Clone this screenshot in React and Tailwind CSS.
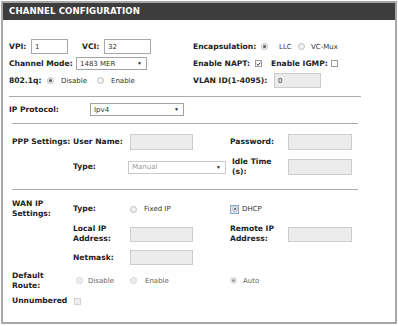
import React from "react";

const B = "font-['DejaVu_Sans',sans-serif] font-bold text-[7.6px] text-[#222] leading-[10px]";
const N = "font-['DejaVu_Sans',sans-serif] text-[7px] text-[#333] leading-[10px]";

function Radio({ checked, disabled, focus }) {
  if (focus) {
    return (
      <span className="flex w-[9px] h-[9px] items-center justify-center border border-[#8fa9d6] bg-[#dfe8f7]">
        <span className="flex w-[6px] h-[6px] items-center justify-center rounded-full bg-[#f4f4f4] border border-[#b9b9b9]">
          {checked && <span className="w-[2px] h-[2px] rounded-full bg-[#444]" />}
        </span>
      </span>
    );
  }
  return (
    <span
      className={
        "flex w-[7px] h-[7px] items-center justify-center rounded-full border " +
        (disabled ? "border-[#d6d6d6] bg-[#ededed]" : "border-[#bdbdbd] bg-[#f2f2f2]")
      }
    >
      {checked && <span className={"w-[3px] h-[3px] rounded-full " + (disabled ? "bg-[#9a9a9a]" : "bg-[#555]")} />}
    </span>
  );
}

function Check({ checked, disabled }) {
  return (
    <span
      className={
        "flex w-[7px] h-[7px] items-center justify-center border " +
        (disabled ? "border-[#d2d2d2] bg-[#eeeeee]" : "border-[#9a9a9a] bg-white")
      }
    >
      {checked && (
        <svg width="6" height="6" viewBox="0 0 6 6">
          <path d="M0.8 3 L2.4 4.6 L5.3 1.2" stroke="#222" strokeWidth="1.1" fill="none" />
        </svg>
      )}
    </span>
  );
}

function Input({ w, h = "h-[15px]", value, disabled }) {
  return (
    <span
      className={
        "flex items-center px-[3px] border " +
        w + " " + h + " " +
        (disabled ? "border-[#cdcdcd] bg-[#ececec]" : "border-[#a9a9a9] bg-white")
      }
    >
      {value !== undefined && (
        <span className={N + (disabled ? " text-[#9a9a9a]" : "")}>{value}</span>
      )}
    </span>
  );
}

function Select({ w, value, disabled }) {
  return (
    <span
      className={
        "flex h-[13px] items-center justify-between pl-[3px] pr-[4px] border " +
        w + " " +
        (disabled ? "border-[#c9c9c9] bg-white" : "border-[#a3a3a3] bg-white")
      }
    >
      <span className={N + (disabled ? " text-[#999]" : "")}>{value}</span>
      <span className="text-[5px] leading-none text-[#222]">▼</span>
    </span>
  );
}

function Sep({ ml, w, mt }) {
  return <div className={"h-px bg-[#ababab] " + ml + " " + w + " " + mt} />;
}

export default function App() {
  return (
    <div className="w-[398px] h-[326px] bg-white overflow-hidden">
      <div className="mt-[1px] ml-[1px] w-[396px] h-[323px] border-2 border-[#a7a7a7] bg-white">
        {/* title bar */}
        <div className="h-[17px] bg-[#3d3d3d] pl-[6px] flex items-center">
          <span className="font-['DejaVu_Sans',sans-serif] font-bold text-[8.6px] text-white tracking-[0.1px]">
            CHANNEL CONFIGURATION
          </span>
        </div>

        {/* VPI / VCI etc */}
        <div className="mt-[18px] pl-[6px]">
          <div className="flex h-[17px] items-center">
            <div className="flex w-[184px] items-center">
              <span className={B + " w-[22px]"}>VPI:</span>
              <Input w="w-[37px]" value="1" />
              <span className={B + " w-[22px] ml-[14px]"}>VCI:</span>
              <Input w="w-[47px]" value="32" />
            </div>
            <div className="flex items-center">
              <span className={B + " w-[68px]"}>Encapsulation:</span>
              <span className="w-[18px]"><Radio checked /></span>
              <span className={N + " w-[19px]"}>LLC</span>
              <span className="w-[13px]"><Radio /></span>
              <span className={N}>VC-Mux</span>
            </div>
          </div>
          <div className="flex h-[17px] items-center">
            <div className="flex w-[184px] items-center">
              <span className={B + " w-[67px]"}>Channel Mode:</span>
              <Select w="w-[71px]" value="1483 MER" />
            </div>
            <div className="flex items-center">
              <span className={B + " w-[62px]"}>Enable NAPT:</span>
              <span className="w-[16px]"><Check checked /></span>
              <span className={B + " w-[60px]"}>Enable IGMP:</span>
              <Check />
            </div>
          </div>
          <div className="flex h-[17px] items-center">
            <div className="flex w-[184px] items-center">
              <span className={B + " w-[38px]"}>802.1q:</span>
              <span className="w-[14px]"><Radio checked /></span>
              <span className={N + " w-[36px]"}>Disable</span>
              <span className="w-[14px]"><Radio /></span>
              <span className={N}>Enable</span>
            </div>
            <div className="flex items-center">
              <span className={B + " w-[81px]"}>VLAN ID(1-4095):</span>
              <Input w="w-[47px]" value="0" disabled />
            </div>
          </div>
        </div>

        <Sep ml="ml-[6px]" w="w-[352px]" mt="mt-[7px]" />

        {/* IP protocol */}
        <div className="mt-[4px] pl-[6px] flex h-[17px] items-center">
          <span className={B + " w-[81px]"}>IP Protocol:</span>
          <Select w="w-[94px]" value="Ipv4" />
        </div>

        <Sep ml="ml-[9px]" w="w-[346px]" mt="mt-[5px]" />

        {/* PPP settings */}
        <div className="mt-[10px] pl-[9px] grid grid-cols-[61px_57px_100px_58px_64px] items-center">
          <span className={B}>PPP Settings:</span>
          <span className={B}>User Name:</span>
          <Input w="w-[63px]" h="h-[16px]" disabled />
          <span className={B}>Password:</span>
          <Input w="w-[64px]" h="h-[16px]" disabled />
        </div>
        <div className="mt-[7px] pl-[9px] grid grid-cols-[61px_55px_102px_58px_64px] items-center">
          <span />
          <span className={B}>Type:</span>
          <Select w="w-[98px]" value="Manual" disabled />
          <span className={B + " pl-[2px]"}>
            Idle Time
            <br />
            (s):
          </span>
          <Input w="w-[64px]" h="h-[16px]" disabled />
        </div>

        <Sep ml="ml-[9px]" w="w-[346px]" mt="mt-[12px]" />

        {/* WAN IP settings */}
        <div className="mt-[9px] pl-[9px] grid grid-cols-[61px_57px_100px_58px_64px] items-center h-[20px]">
          <span className={B}>
            WAN IP
            <br />
            Settings:
          </span>
          <span className={B}>Type:</span>
          <span className="flex items-center">
            <span className="w-[14px]"><Radio /></span>
            <span className={N}>Fixed IP</span>
          </span>
          <span className="flex items-center">
            <span className="w-[12px]"><Radio checked focus /></span>
            <span className={N}>DHCP</span>
          </span>
          <span />
        </div>
        <div className="mt-[5px] pl-[9px] grid grid-cols-[61px_57px_100px_58px_64px] items-center h-[20px]">
          <span />
          <span className={B}>
            Local IP
            <br />
            Address:
          </span>
          <Input w="w-[63px]" disabled />
          <span className={B}>
            Remote IP
            <br />
            Address:
          </span>
          <Input w="w-[64px]" disabled />
        </div>
        <div className="mt-[5px] pl-[9px] grid grid-cols-[61px_57px_100px_58px_64px] items-center h-[17px]">
          <span />
          <span className={B}>Netmask:</span>
          <Input w="w-[63px]" disabled />
          <span />
          <span />
        </div>
        <div className="mt-[4px] pl-[9px] grid grid-cols-[61px_57px_100px_58px_64px] items-center h-[21px]">
          <span className={B}>
            Default
            <br />
            Route:
          </span>
          <span className="flex items-center pl-[3px]">
            <span className="w-[12px]"><Radio disabled /></span>
            <span className={N + " text-[#666]"}>Disable</span>
          </span>
          <span className="flex items-center">
            <span className="w-[15px]"><Radio disabled /></span>
            <span className={N + " text-[#666]"}>Enable</span>
          </span>
          <span className="flex items-center">
            <span className="w-[13px]"><Radio checked disabled /></span>
            <span className={N + " text-[#666]"}>Auto</span>
          </span>
          <span />
        </div>
        <div className="mt-[3px] pl-[9px] grid grid-cols-[62px_56px] items-center h-[14px]">
          <span className={B}>Unnumbered</span>
          <Check disabled />
        </div>
      </div>
    </div>
  );
}
